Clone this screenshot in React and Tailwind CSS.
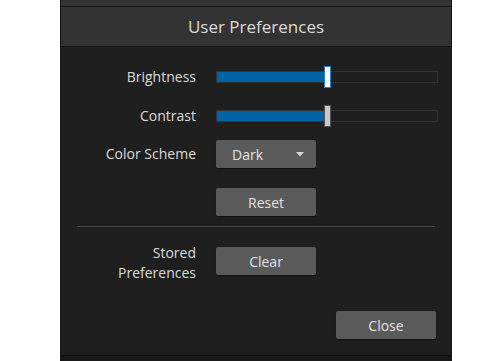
export default function App() {
  const font = { fontFamily: '"Open Sans", "Noto Sans", sans-serif' };
  const Slider = ({ thumb }) => (
    <div className="relative h-[22px] w-[222px] flex items-center">
      <div className="h-[12px] w-full border border-[#333] bg-[#1f1f1f]">
        <div className="h-full w-[108px] bg-[#0063a6]" />
      </div>
      <div
        className={
          "absolute left-[108px] top-0 h-[22px] w-[7px] " +
          (thumb === "active"
            ? "bg-white border border-[#2b7fd0]"
            : "bg-[#c8c8c8] border border-[#555]")
        }
      />
    </div>
  );
  const Btn = ({ children, className = "" }) => (
    <div
      className={
        "flex h-[28px] w-[100px] shrink-0 items-center justify-center rounded-[2px] bg-[#5a5a5a] text-[14px] text-[#e2e2e2] shadow-[0_1px_1px_rgba(0,0,0,0.5)] " +
        className
      }
    >
      {children}
    </div>
  );
  const Label = ({ children, className = "" }) => (
    <div className={"w-[135px] shrink-0 text-right text-[14px] leading-[20px] text-[#dcdcdc] " + className}>
      {children}
    </div>
  );
  return (
    <div className="flex h-[361px] w-[501px] bg-white" style={font}>
      <div className="ml-[60px] flex w-[392px] flex-col border-l border-r border-[#151515] bg-[#1f1f1f]">
        <div className="h-[6px] bg-[#333333] border-b border-[#161616] box-content" />
        <div className="flex h-[40px] items-center justify-center border-b border-[#161616] bg-[#333333] text-[17px] text-[#dcdcdc]">
          User Preferences
        </div>
        <div className="flex flex-1 flex-col pt-[19px]">
          <div className="flex h-[22px] items-center gap-[20px]">
            <Label>Brightness</Label>
            <Slider thumb="active" />
          </div>
          <div className="mt-[17px] flex h-[22px] items-center gap-[20px]">
            <Label>Contrast</Label>
            <Slider thumb="idle" />
          </div>
          <div className="mt-[13px] flex h-[28px] items-center gap-[20px]">
            <Label>Color Scheme</Label>
            <div className="flex h-[28px] w-[100px] items-center justify-between rounded-[2px] bg-[#5a5a5a] pl-[16px] pr-[12px] text-[14px] text-[#e2e2e2] shadow-[0_1px_1px_rgba(0,0,0,0.5)]">
              <span>Dark</span>
              <svg width="8" height="5" viewBox="0 0 8 5">
                <path d="M0 0 L8 0 L4 4.5 Z" fill="#d8d8d8" />
              </svg>
            </div>
          </div>
          <div className="mt-[20px] flex h-[28px] gap-[20px]">
            <div className="w-[135px] shrink-0" />
            <Btn>Reset</Btn>
          </div>
          <div className="mx-[16px] mt-[10px] h-px bg-[#4a4a4a]" />
          <div className="mt-[20px] flex h-[28px] items-center gap-[20px]">
            <Label className="translate-y-[2px]">
              Stored
              <br />
              Preferences
            </Label>
            <Btn>Clear</Btn>
          </div>
          <div className="mt-[36px] flex justify-end pr-[15px]">
            <Btn>Close</Btn>
          </div>
        </div>
        <div className="h-[5px] border-t border-[#111] bg-[#191919] box-content" />
      </div>
    </div>
  );
}
